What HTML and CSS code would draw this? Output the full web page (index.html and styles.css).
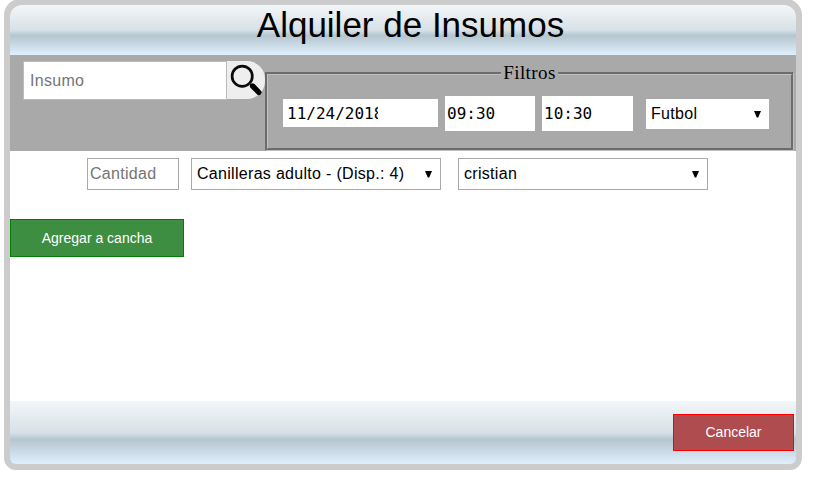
FILE: index.html
```html
<!DOCTYPE html>
<html lang="es">
<head>
<meta charset="utf-8">
<title>Alquiler de Insumos</title>
<link rel="stylesheet" href="styles.css">
</head>
<body>
<main class="modal">
  <header class="modal-header"><h1>Alquiler de Insumos</h1></header>
  <section class="toolbar">
    <div class="search">
      <div class="search-input">Insumo</div>
      <div class="search-button">
        <svg width="38" height="38" viewBox="0 0 38 38">
          <circle cx="15.2" cy="15.2" r="10.1" fill="none" stroke="#0a0a0a" stroke-width="2.7"/>
          <path d="M22.5 22.5l3 3" stroke="#333" stroke-width="1.5"/>
          <path d="M25.6 25l6.2 6.3" stroke="#000" stroke-width="5.4" stroke-linecap="round"/>
        </svg>
      </div>
    </div>
    <fieldset class="filters">
      <legend>Filtros</legend>
      <div class="filter-row">
        <div class="date"><span>11/24/2018</span></div>
        <div class="time">09:30</div>
        <div class="time end">10:30</div>
        <div class="select sport"><span>Futbol</span><svg class="arrow" width="7" height="7" viewBox="0 0 7 7"><path d="M0 0h7L4.2 6.5H2.8z"/></svg></div>
      </div>
    </fieldset>
  </section>
  <section class="content">
    <div class="item-row">
      <div class="quantity">Cantidad</div>
      <div class="select item"><span>Canilleras adulto - (Disp.: 4)</span><svg class="arrow" width="7" height="7" viewBox="0 0 7 7"><path d="M0 0h7L4.2 6.5H2.8z"/></svg></div>
      <div class="select client"><span>cristian</span><svg class="arrow" width="7" height="7" viewBox="0 0 7 7"><path d="M0 0h7L4.2 6.5H2.8z"/></svg></div>
    </div>
    <button class="button add">Agregar a cancha</button>
  </section>
  <footer class="modal-footer"><button class="button cancel">Cancelar</button></footer>
</main>
</body>
</html>
```
FILE: styles.css
```css
* { box-sizing: border-box; }
html { overflow: hidden; background: #fff; }
body {
  margin: 0;
  overflow: hidden;
  font: 16px/20px "Liberation Sans", Arial, sans-serif;
  color: #000;
}
.modal {
  width: 798px;
  height: 471px;
  margin: -1px 0 0 4px;
  border: 6px solid #ccc;
  border-radius: 16px 16px 12px 12px;
  background: #ccc;
}
.modal-header, .modal-footer {
  background: linear-gradient(to bottom, #f2f6f8 0%, #d8e1e7 50%, #b5c6d0 61%, #e0effc 100%);
}
.modal-header {
  height: 50px;
  border-radius: 12px 12px 0 0;
  text-align: center;
}
h1 {
  margin: 0 0 0 15px;
  font-size: 35px;
  line-height: 40px;
  font-weight: 400;
}
.toolbar {
  display: flex;
  height: 96px;
  padding-left: 13px;
  background: #a9a9a9;
}
.search { display: flex; padding-top: 6px; }
.search-input {
  width: 204px;
  height: 39px;
  padding: 9px 6px;
  border: 1px solid #bbb;
  background: #fff;
  color: #757575;
}
.search-input, .quantity, .select { letter-spacing: .3px; }
.search-button {
  width: 38px;
  height: 38px;
  background: #eee;
  border-radius: 0 18px 18px 0;
}
.search-button svg { display: block; }
.filters {
  width: 529px;
  height: 88px;
  min-width: 0;
  margin: 8px 0 0;
  padding: 0 15px;
  border: 3px groove #c0c0c0;
}
.filters legend {
  margin: 0 auto;
  padding: 0 2px;
  font: 19px/20px "Liberation Serif", serif;
  letter-spacing: .4px;
}
.filter-row { display: flex; padding-top: 13px; }
.date, .time {
  background: #fff;
  font: 16px/20px "DejaVu Sans Mono", monospace;
}
.date { width: 155px; height: 28px; margin: 3px 7px 0 0; padding: 5px 4px 3px; }
.date span { display: block; width: 91px; overflow: hidden; }
.time { width: 90px; height: 35px; padding: 8px 2px; }
.time.end { width: 91px; margin: 0 12px 0 7px; }
.select {
  display: flex;
  align-items: center;
  justify-content: space-between;
  padding: 0 8px 0 5px;
  border: 1px solid #a9a9a9;
  background: #fff;
}
.arrow { display: block; margin-top: 1px; }
.sport { width: 125px; height: 32px; margin-top: 2px; }
.content {
  height: 250px;
  padding-top: 7px;
  background: #fff;
}
.item-row { display: flex; padding-left: 77px; }
.quantity {
  width: 92px;
  height: 32px;
  margin-right: 12px;
  padding: 5px 2px;
  border: 1px solid #a9a9a9;
  color: #757575;
}
.item, .client { width: 250px; height: 32px; }
.item { margin-right: 17px; }
.button {
  display: block;
  padding: 0;
  border: 1px solid;
  color: #fff;
  font: 14px/16px "Liberation Sans", Arial, sans-serif;
}
.add {
  width: 174px;
  height: 38px;
  margin-top: 29px;
  background: #3e8e41;
  border-color: #008000;
}
.modal-footer {
  display: flex;
  justify-content: flex-end;
  height: 63px;
  padding: 13px 2px 0 0;
  border-radius: 0 0 6px 6px;
}
.cancel {
  width: 121px;
  height: 37px;
  padding-bottom: 2px;
  background: #af4c50;
  border-color: #f00;
}
```
